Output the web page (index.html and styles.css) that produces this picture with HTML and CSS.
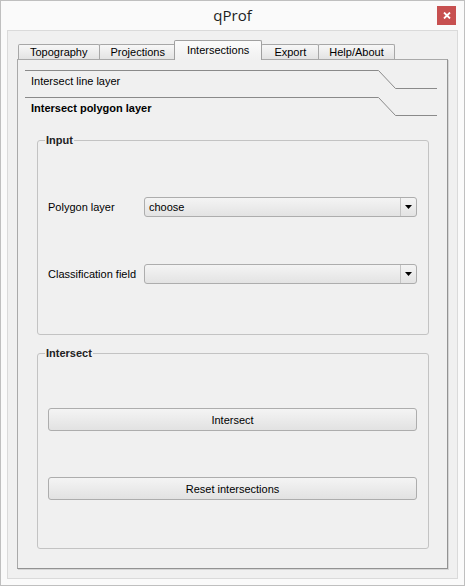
FILE: index.html
```html
<!DOCTYPE html>
<html>
<head>
<meta charset="utf-8">
<link rel="stylesheet" href="styles.css">
</head>
<body>
<div class="window">
  <div class="titlebar">
    <span></span>
    <span class="title">qProf</span>
    <button class="close" aria-label="Close">
      <svg width="8" height="7" viewBox="0 0 8 7"><path d="M1 0.5 L7 6.5 M7 0.5 L1 6.5" stroke="#fff" stroke-width="1.8" fill="none"/></svg>
    </button>
  </div>
  <div class="frame">
    <div class="tabwidget">
      <div class="tabbar">
        <div class="tab">Topography</div>
        <div class="tab">Projections</div>
        <div class="tab selected">Intersections</div>
        <div class="tab tab-short">Export</div>
        <div class="tab tab-narrow">Help/About</div>
      </div>
      <div class="pane">
        <div class="tb-header">
          <svg class="tb-shape" viewBox="0 0 413 19"><path d="M0 0.5 H353.5 L370.5 18.5 H412" stroke="#8a8a8a" stroke-width="1" fill="none"/></svg>
          <span class="tb-label">Intersect line layer</span>
        </div>
        <div class="tb-header current">
          <svg class="tb-shape" viewBox="0 0 413 19"><path d="M0 0.5 H353.5 L370.5 18.5 H412" stroke="#8a8a8a" stroke-width="1" fill="none"/></svg>
          <span class="tb-label">Intersect polygon layer</span>
        </div>
        <div class="tb-page">
          <fieldset class="group group-input">
            <legend>Input</legend>
            <div class="form">
              <span class="label">Polygon layer</span>
              <div class="combo">
                <span class="combo-text">choose</span>
                <span class="combo-arrow"><svg width="7" height="4" viewBox="0 0 7 4"><path d="M0 0 H7 L3.5 4 Z" fill="#000"/></svg></span>
              </div>
              <span class="label">Classification field</span>
              <div class="combo">
                <span class="combo-text"></span>
                <span class="combo-arrow"><svg width="7" height="4" viewBox="0 0 7 4"><path d="M0 0 H7 L3.5 4 Z" fill="#000"/></svg></span>
              </div>
            </div>
          </fieldset>
          <fieldset class="group group-intersect">
            <legend>Intersect</legend>
            <div class="buttons">
              <button class="push">Intersect</button>
              <button class="push">Reset intersections</button>
            </div>
          </fieldset>
        </div>
      </div>
    </div>
  </div>
</div>
</body>
</html>
```

FILE: styles.css
```css
* { box-sizing: border-box; }
html, body { margin: 0; padding: 0; }
body {
  font-family: "Liberation Sans", Arial, sans-serif;
  font-size: 11px;
  color: #000;
  background: #fff;
}
.window {
  width: 465px;
  height: 586px;
  border: 1px solid #bfbfbf;
  background: #fafafa;
  display: flex;
  flex-direction: column;
}
.titlebar {
  height: 29px;
  flex: none;
  display: grid;
  grid-template-columns: 1fr auto 1fr;
}
.title {
  font-family: "Open Sans", "Noto Sans", sans-serif;
  font-size: 15px;
  line-height: 29px;
  color: #1e1e1e;
}
.close {
  justify-self: end;
  align-self: start;
  margin: 5px 8px 0 0;
  width: 19px;
  height: 19px;
  padding: 0;
  border: 0;
  background: #c75050;
  display: flex;
  align-items: center;
  justify-content: center;
}
.frame {
  flex: 1;
  margin: 0 6px 6px;
  border: 1px solid #dadada;
  background: #f0f0f0;
  padding: 9px;
  display: flex;
  flex-direction: column;
}
.tabwidget {
  flex: 1;
  display: flex;
  flex-direction: column;
}
.tabbar {
  height: 19px;
  flex: none;
  display: flex;
  align-items: flex-end;
  padding-left: 1px;
}
.tab {
  height: 15px;
  line-height: 14px;
  padding: 0 11px;
  border: 1px solid #a7a7a7;
  border-bottom: 0;
  border-radius: 2px 2px 0 0;
  background: linear-gradient(#f7f7f7, #e3e3e3);
  margin-right: -1px;
  white-space: nowrap;
  text-align: center;
}
.tab.tab-narrow { padding: 0 10px; }
.tab.tab-short { min-width: 58px; }
.tab.selected {
  position: relative;
  z-index: 1;
  height: 20px;
  line-height: 19px;
  padding: 0 12px;
  margin: 0 -1px -1px -2px;
  background: linear-gradient(#fbfbfb, #f0f0f0);
  border-color: #a0a0a0;
}
.pane {
  flex: 1;
  border: 1px solid #a9a9a9;
  border-right-color: #929292;
  border-bottom-color: #929292;
  box-shadow: 1px 1px 0 #d6d6d6;
  background: #f0f0f0;
  padding: 10px 9px 0 7px;
}
.tb-header {
  position: relative;
  height: 27px;
  padding: 4px 0 0 6px;
  line-height: 14px;
}
.tb-shape {
  position: absolute;
  left: 0;
  top: 0;
  width: 413px;
  height: 19px;
}
.tb-label { position: relative; }
.tb-header.current .tb-label { font-weight: bold; }
.tb-page {
  padding: 9px 9px 0 12px;
}
.group {
  margin: 0;
  min-width: 0;
  border: 1px solid #c3c3c3;
  border-radius: 3px;
  padding: 49px 11px 50px 10px;
}
.group legend {
  margin-left: -3px;
  padding: 0 1px;
  font-weight: bold;
  line-height: 15px;
  color: #222;
}
.group-intersect {
  margin-top: 11px;
  padding: 47px 11px 48px 10px;
}
.form {
  display: grid;
  grid-template-columns: 96px 1fr;
  grid-auto-rows: 20px;
  row-gap: 47px;
  align-items: center;
}
.combo {
  height: 20px;
  border: 1px solid #adadad;
  border-radius: 3px;
  background: linear-gradient(#f4f4f4, #e3e3e3);
  display: flex;
  align-items: center;
}
.combo-text {
  flex: 1;
  padding-left: 4px;
}
.combo-arrow {
  width: 16px;
  align-self: stretch;
  border-left: 1px solid #c4c4c4;
  display: flex;
  align-items: center;
  justify-content: center;
}
.buttons {
  display: flex;
  flex-direction: column;
  gap: 46px;
}
.push {
  height: 23px;
  margin: 0;
  padding: 0;
  border: 1px solid #adadad;
  border-radius: 3px;
  background: linear-gradient(#f4f4f4, #e2e2e2);
  font-family: "Liberation Sans", Arial, sans-serif;
  font-size: 11px;
  color: #000;
}
```
